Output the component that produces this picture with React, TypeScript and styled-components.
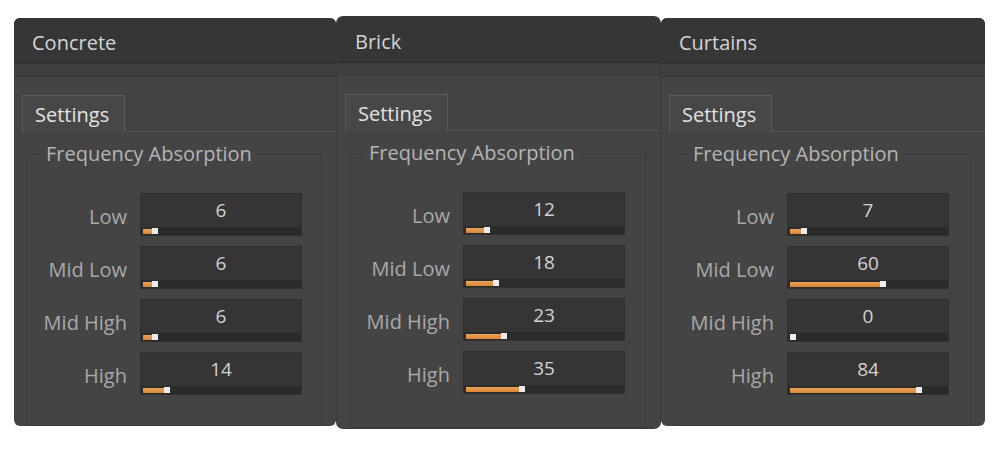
import React from "react";
import styled, { createGlobalStyle } from "styled-components";

const Global = createGlobalStyle`
  html, body { margin: 0; padding: 0; background: #ffffff; }
  body { font-family: "Open Sans", "Noto Sans", sans-serif; }
`;

const Stage = styled.div`
  display: flex;
  align-items: flex-start;
  gap: 1px;
  padding: 18px 0 0 14px;
  width: 998px;
  height: 449px;
  box-sizing: border-box;
`;

const Panel = styled.section<{ $front?: boolean; $w: number }>`
  width: ${(p) => p.$w}px;
  height: ${(p) => (p.$front ? 411 : 408)}px;
  margin-top: ${(p) => (p.$front ? -1 : 0)}px;
  border-radius: 6px;
  background: #444444;
  overflow: hidden;
  display: flex;
  flex-direction: column;
  box-shadow: ${(p) => (p.$front ? "0 0 0 1px #3a3a3a" : "none")};
`;

const Header = styled.div`
  height: 46px;
  flex: none;
  box-sizing: border-box;
  background: #363636;
  display: flex;
  align-items: center;
  padding: 3px 0 0 18px;
  font-size: 20px;
  color: #d4d4d4;
  border-bottom: 1px solid #2f2f2f;
`;

const Band = styled.div`
  height: 12px;
  flex: none;
  background: #3f3f3f;
  border-bottom: 1px solid #393939;
`;

const Body = styled.div`
  flex: 1;
  display: flex;
  flex-direction: column;
  padding: 18px 0 0 8px;
  min-height: 0;
`;

const TabBar = styled.div`
  display: flex;
  height: 37px;
  flex: none;
`;

const Tab = styled.div`
  width: 103px;
  box-sizing: border-box;
  border: 1px solid #5a5a5a;
  border-bottom: none;
  display: flex;
  align-items: center;
  padding: 1px 0 0 12px;
  font-size: 20px;
  color: #e2e2e2;
  background: #474747;
`;

const TabFill = styled.div`
  flex: 1;
  border-bottom: 1px solid #555555;
`;

const Group = styled.fieldset`
  margin: 9px 14px 0 5px;
  padding: 26px 0 0 0;
  flex: 1;
  border: 1px solid #393939;
  box-shadow: inset 1px 1px 0 #4a4a4a;
  min-width: 0;
`;

const Legend = styled.legend`
  margin-left: 14px;
  padding: 0 4px;
  font-size: 20px;
  line-height: 26px;
  color: #b4b4b4;
`;

const Rows = styled.div`
  display: grid;
  grid-template-columns: 99px 162px;
  column-gap: 13px;
  row-gap: 10px;
`;

const Label = styled.div`
  font-size: 20px;
  color: #a9a9a9;
  text-align: right;
  align-self: center;
  padding-top: 4px;
`;

const Field = styled.div`
  height: 43px;
  box-sizing: border-box;
  background: #353535;
  border: 1px solid #303030;
  display: flex;
  flex-direction: column;
`;

const Value = styled.div`
  flex: 1;
  display: flex;
  align-items: center;
  justify-content: center;
  font-size: 19px;
  color: #d2d2d2;
  padding-bottom: 2px;
`;

const Track = styled.div`
  height: 8px;
  flex: none;
  background: #2b2b2b;
  display: flex;
  align-items: center;
  padding: 0 2px;
`;

const Fill = styled.div`
  height: 5px;
  background: linear-gradient(#e9a55a, #d98432);
  flex: none;
`;

const Handle = styled.div`
  width: 6px;
  height: 6px;
  background: #ececec;
  flex: none;
`;

type Item = { label: string; value: number };

const panels: { title: string; w: number; items: Item[]; front?: boolean }[] = [
  {
    title: "Concrete",
    w: 322,
    items: [
      { label: "Low", value: 6 },
      { label: "Mid Low", value: 6 },
      { label: "Mid High", value: 6 },
      { label: "High", value: 14 },
    ],
  },
  {
    title: "Brick",
    w: 323,
    front: true,
    items: [
      { label: "Low", value: 12 },
      { label: "Mid Low", value: 18 },
      { label: "Mid High", value: 23 },
      { label: "High", value: 35 },
    ],
  },
  {
    title: "Curtains",
    w: 324,
    items: [
      { label: "Low", value: 7 },
      { label: "Mid Low", value: 60 },
      { label: "Mid High", value: 0 },
      { label: "High", value: 84 },
    ],
  },
];

const TRACK = 160 - 4 - 6;

export default function App() {
  return (
    <>
      <Global />
      <Stage>
        {panels.map((p) => (
          <Panel key={p.title} $front={p.front} $w={p.w}>
            <Header>{p.title}</Header>
            <Band />
            <Body>
              <TabBar>
                <Tab>Settings</Tab>
                <TabFill />
              </TabBar>
              <Group>
                <Legend>Frequency Absorption</Legend>
                <Rows>
                  {p.items.map((it) => (
                    <React.Fragment key={it.label}>
                      <Label>{it.label}</Label>
                      <Field>
                        <Value>{it.value}</Value>
                        <Track>
                          <Fill style={{ width: Math.round((it.value / 100) * TRACK) }} />
                          <Handle />
                        </Track>
                      </Field>
                    </React.Fragment>
                  ))}
                </Rows>
              </Group>
            </Body>
          </Panel>
        ))}
      </Stage>
    </>
  );
}
